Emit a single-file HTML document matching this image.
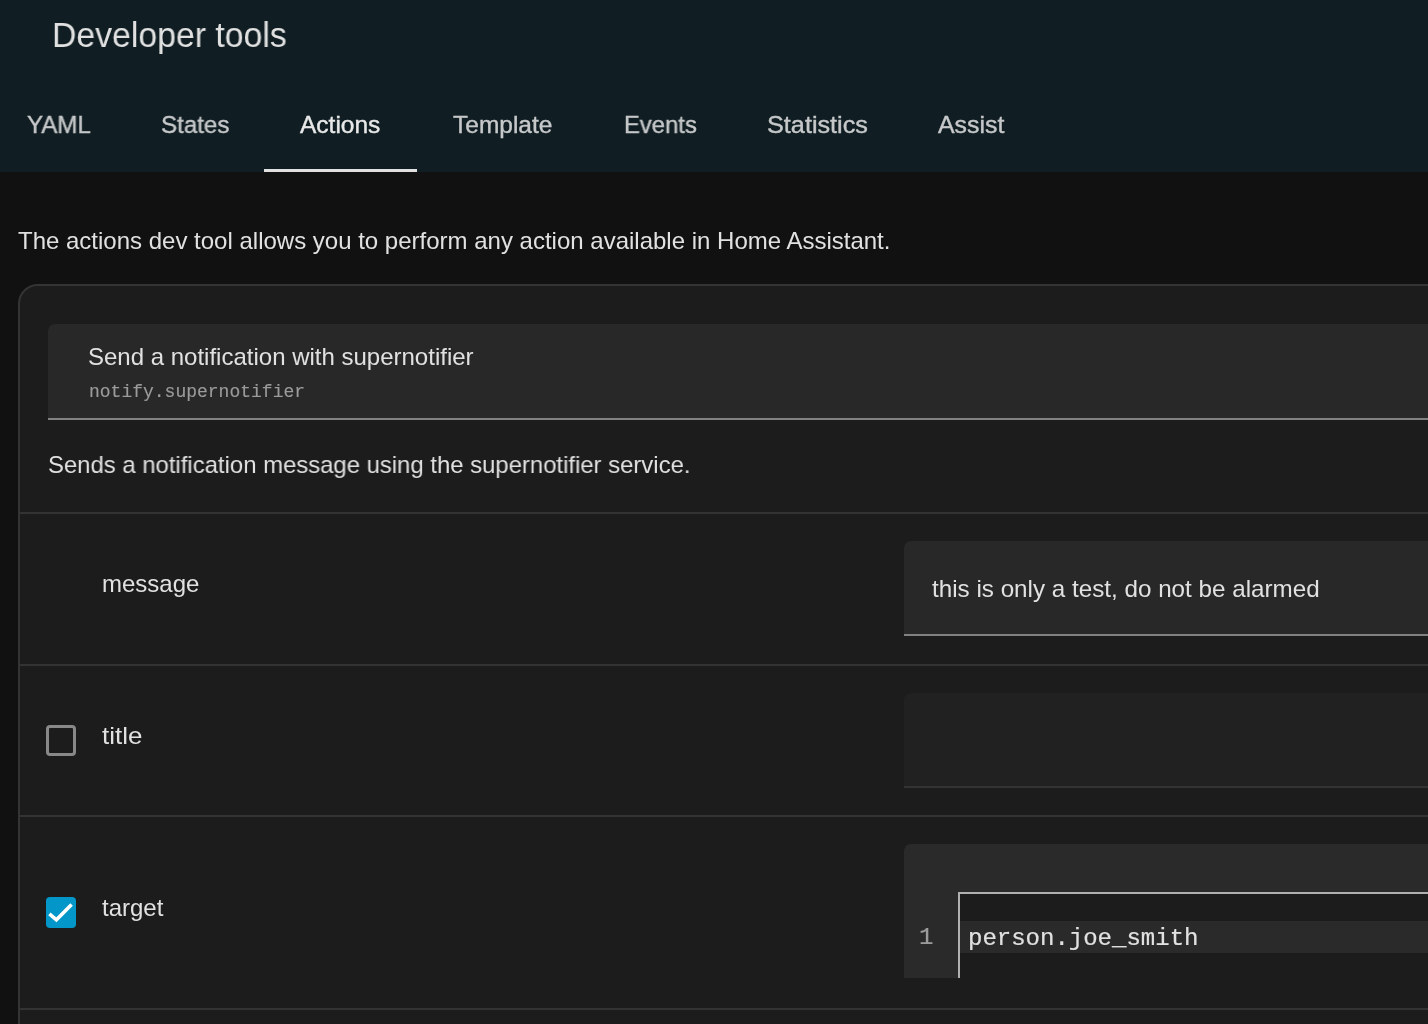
<!DOCTYPE html>
<html><head><meta charset="utf-8">
<style>
html,body{margin:0;padding:0;width:1428px;height:1024px;overflow:hidden;background:#111111;}
body{position:relative;font-family:"Liberation Sans",sans-serif;color:#e1e1e1;}
.a{position:absolute;white-space:nowrap;}
.t{will-change:transform;}
.t{line-height:1;}
#hdr{position:absolute;left:0;top:0;width:1428px;height:172px;background:#101e23;}
#title{left:52px;top:17px;font-size:35px;transform:scaleX(0.965);transform-origin:0 0;color:#e1e1e1;}
.tab{top:113px;font-size:24.5px;color:#c6c8c9;-webkit-text-stroke:0.4px #c6c8c9;transform-origin:0 0;}
.tab.act{color:#e8e8e8;-webkit-text-stroke:0.4px #e8e8e8;}
#uline{left:264px;top:169px;width:153px;height:3px;background:#e1e1e1;}
#desc{left:18px;top:229px;font-size:24px;}
#card{left:18px;top:284px;width:1500px;height:900px;box-sizing:border-box;border:2px solid #343434;border-radius:20px;background:#1c1c1c;}
#svc{left:48px;top:324px;width:1450px;height:96px;box-sizing:border-box;background:#282828;border-radius:7px 7px 0 0;border-bottom:2px solid #828282;}
#svcname{left:88px;top:345px;font-size:24px;}
#svcid{left:89px;top:383px;font-family:"Liberation Mono",monospace;font-size:18px;color:#9b9b9b;-webkit-text-stroke:0.15px #9b9b9b;}
#svcdesc{left:48px;top:453px;font-size:24px;transform:scaleX(0.995);transform-origin:0 0;}
.div{left:20px;width:1420px;height:2px;background:#333333;}
.lbl{left:102px;font-size:24px;}
.inp{left:904px;width:600px;box-sizing:border-box;border-radius:7px 7px 0 0;}
.cb{left:46px;width:30px;height:31px;box-sizing:border-box;border-radius:4px;}
.mono{font-family:"Liberation Mono",monospace;-webkit-text-stroke:0.2px currentColor;}
</style></head>
<body>
<div id="hdr"></div>
<div id="title" class="a t">Developer tools</div>
<div class="a t tab" style="left:27px;transform:scaleX(0.984)">YAML</div>
<div class="a t tab" style="left:161px;transform:scaleX(0.985)">States</div>
<div class="a t tab act" style="left:300px">Actions</div>
<div class="a t tab" style="left:453px">Template</div>
<div class="a t tab" style="left:624px;transform:scaleX(0.972)">Events</div>
<div class="a t tab" style="left:767px;transform:scaleX(1.03)">Statistics</div>
<div class="a t tab" style="left:938px;transform:scaleX(1.015)">Assist</div>
<div id="uline" class="a"></div>

<div id="desc" class="a t">The actions dev tool allows you to perform any action available in Home Assistant.</div>

<div id="card" class="a"></div>
<div id="svc" class="a"></div>
<div id="svcname" class="a t">Send a notification with supernotifier</div>
<div id="svcid" class="a t">notify.supernotifier</div>
<div id="svcdesc" class="a t">Sends a notification message using the supernotifier service.</div>

<div class="a div" style="top:512px"></div>
<div class="a div" style="top:664px"></div>
<div class="a div" style="top:815px"></div>
<div class="a div" style="top:1008px"></div>

<!-- message row -->
<div class="a t lbl" style="top:572px">message</div>
<div class="a inp" style="top:541px;height:95px;background:#282828;border-bottom:2px solid #828282;"></div>
<div class="a t" style="left:932px;top:577px;font-size:24px;transform:scaleX(1.009);transform-origin:0 0;">this is only a test, do not be alarmed</div>

<!-- title row -->
<div class="a cb" style="top:725px;border:3px solid #888888;"></div>
<div class="a t lbl" style="top:724px;transform:scaleX(1.08);transform-origin:0 0;">title</div>
<div class="a inp" style="top:693px;height:95px;background:#212121;border-bottom:2px solid #333333;"></div>

<!-- target row -->
<div class="a cb" style="top:897px;background:#0396c9;">
<svg width="30" height="31" viewBox="0 0 30 31" style="position:absolute;left:0;top:0"><path d="M3.4 16.8 L10.4 22.8 L25.6 7.6" fill="none" stroke="#ffffff" stroke-width="3.6"/></svg>
</div>
<div class="a t lbl" style="top:896px">target</div>
<div class="a" style="left:904px;top:844px;width:600px;height:134px;background:#2a2a2a;border-radius:7px 7px 0 0;"></div>
<div class="a" style="left:958px;top:892px;width:600px;height:84px;background:#1c1c1c;border-left:2px solid #b0b0b0;border-top:2px solid #b0b0b0;"></div>
<div class="a" style="left:960px;top:921px;width:600px;height:32px;background:#2a2a2a;"></div>
<div class="a t mono" style="left:919px;top:926px;font-size:24px;color:#9b9b9b;">1</div>
<div class="a t mono" style="left:968px;top:927px;font-size:24px;color:#e1e1e1;">person.joe_smith</div>
</body></html>
